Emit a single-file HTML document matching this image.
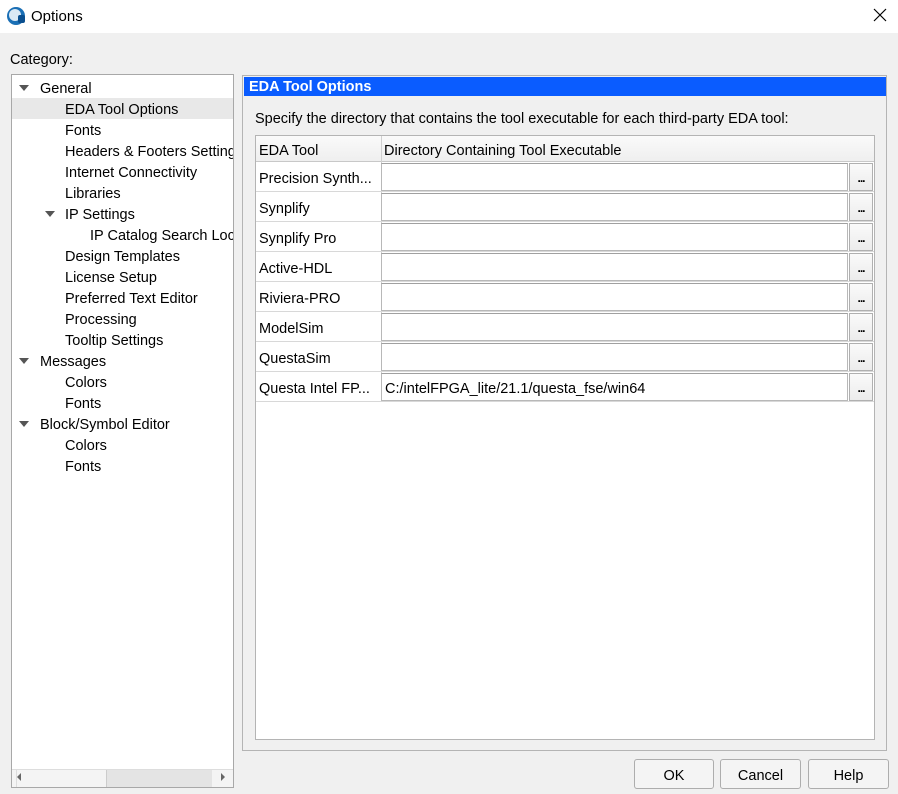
<!DOCTYPE html>
<html><head><meta charset="utf-8"><style>
*{box-sizing:border-box;margin:0;padding:0}
body{width:898px;height:794px;background:#f0f0f0;font-family:"Liberation Sans",sans-serif;font-size:14.5px;color:#000;position:relative;overflow:hidden}
.a{position:absolute;white-space:nowrap}
.tree .a{line-height:21px;height:21px}
.tri{width:0;height:0;border-left:5px solid transparent;border-right:5px solid transparent;border-top:6px solid #555}
.row{position:absolute;left:256px;width:618px;height:30px;border-bottom:1px solid #d8d8d8}
.row .n{position:absolute;left:3px;top:2px;line-height:30px}
.row .f{position:absolute;left:125px;top:1px;width:467px;height:28px;background:#fff;border:1px solid #b8b8b8;border-top-color:#a0a0a0;padding-left:3px;line-height:30px}
.row .b{position:absolute;left:593px;top:1px;width:24px;height:28px;background:linear-gradient(#fafafa,#ececec);border:1px solid #b0b0b0;font-size:12px;text-align:center;line-height:28px;font-weight:bold;letter-spacing:-1px}
.btn{position:absolute;top:759px;height:30px;border:1px solid #adadad;border-radius:3px;background:#f4f4f4;text-align:center;line-height:32px}
</style></head><body>
<div class="a" style="left:0;top:0;width:898px;height:33px;background:#fff"></div>
<svg class="a" style="left:6px;top:6px" width="20" height="20" viewBox="0 0 20 20"><circle cx="10" cy="10" r="9" fill="#1a6fb5"/><circle cx="9" cy="9" r="6" fill="#dbe9f5"/><rect x="12" y="9" width="7" height="8" rx="2" fill="#0a4f8f"/></svg>
<div class="a" style="left:31px;top:8px;font-size:15px">Options</div>
<svg class="a" style="left:873px;top:8px" width="14" height="14" viewBox="0 0 14 14"><path d="M1 1L13 13M13 1L1 13" stroke="#000" stroke-width="1.2"/></svg>
<div class="a" style="left:10px;top:52px">Category:</div>
<div class="a" style="left:11px;top:74px;width:223px;height:714px;background:#fff;border:1px solid #a8a8a8"></div>
<div class="a" style="left:12px;top:98px;width:221px;height:21px;background:#e8e8e8"></div>
<div class="tree" style="position:absolute;left:0;top:79px;width:233px;height:688px;overflow:hidden">
<div class="a tri" style="left:19px;top:6px;height:0"></div><div class="a" style="left:40px;top:0">General</div>
<div class="a" style="left:65px;top:21px">EDA Tool Options</div>
<div class="a" style="left:65px;top:42px">Fonts</div>
<div class="a" style="left:65px;top:63px">Headers &amp; Footers Settings</div>
<div class="a" style="left:65px;top:84px">Internet Connectivity</div>
<div class="a" style="left:65px;top:105px">Libraries</div>
<div class="a tri" style="left:45px;top:132px;height:0"></div><div class="a" style="left:65px;top:126px">IP Settings</div>
<div class="a" style="left:90px;top:147px">IP Catalog Search Locations</div>
<div class="a" style="left:65px;top:168px">Design Templates</div>
<div class="a" style="left:65px;top:189px">License Setup</div>
<div class="a" style="left:65px;top:210px">Preferred Text Editor</div>
<div class="a" style="left:65px;top:231px">Processing</div>
<div class="a" style="left:65px;top:252px">Tooltip Settings</div>
<div class="a tri" style="left:19px;top:279px;height:0"></div><div class="a" style="left:40px;top:273px">Messages</div>
<div class="a" style="left:65px;top:294px">Colors</div>
<div class="a" style="left:65px;top:315px">Fonts</div>
<div class="a tri" style="left:19px;top:342px;height:0"></div><div class="a" style="left:40px;top:336px">Block/Symbol Editor</div>
<div class="a" style="left:65px;top:357px">Colors</div>
<div class="a" style="left:65px;top:378px">Fonts</div>
</div>
<div class="a" style="left:12px;top:769px;width:221px;height:18px;background:#f4f4f4;border-top:1px solid #ddd"></div>
<div class="a" style="left:12px;top:769px;width:5px;height:18px;border-right:1px solid #ddd"></div>
<div class="a" style="left:17px;top:773px;width:0;height:0;border-top:4px solid transparent;border-bottom:4px solid transparent;border-right:4px solid #666"></div>
<div class="a" style="left:106px;top:770px;width:106px;height:17px;background:#e4e4e4;border-left:1px solid #ccc"></div>
<div class="a" style="left:221px;top:773px;width:0;height:0;border-top:4px solid transparent;border-bottom:4px solid transparent;border-left:4px solid #666"></div>
<div class="a" style="left:242px;top:75px;width:645px;height:676px;border:1px solid #b4b4b4"></div>
<div class="a" style="left:244px;top:77px;width:642px;height:19px;background:#0a5cff;color:#fff;font-weight:bold;line-height:20px;padding-left:5px;overflow:hidden">EDA Tool Options</div>
<div class="a" style="left:255px;top:111px">Specify the directory that contains the tool executable for each third-party EDA tool:</div>
<div class="a" style="left:255px;top:135px;width:620px;height:605px;background:#fff;border:1px solid #b4b4b4"></div>
<div class="a" style="left:256px;top:136px;width:618px;height:26px;background:linear-gradient(#fafafa,#efefef);border-bottom:1px solid #c8c8c8"></div>
<div class="a" style="left:381px;top:136px;width:1px;height:266px;background:#d0d0d0"></div>
<div class="a" style="left:259px;top:138px;line-height:26px">EDA Tool</div>
<div class="a" style="left:384px;top:138px;line-height:26px">Directory Containing Tool Executable</div>
<div class="row" style="top:162px"><div class="n">Precision Synth...</div><div class="f"></div><div class="b">...</div></div>
<div class="row" style="top:192px"><div class="n">Synplify</div><div class="f"></div><div class="b">...</div></div>
<div class="row" style="top:222px"><div class="n">Synplify Pro</div><div class="f"></div><div class="b">...</div></div>
<div class="row" style="top:252px"><div class="n">Active-HDL</div><div class="f"></div><div class="b">...</div></div>
<div class="row" style="top:282px"><div class="n">Riviera-PRO</div><div class="f"></div><div class="b">...</div></div>
<div class="row" style="top:312px"><div class="n">ModelSim</div><div class="f"></div><div class="b">...</div></div>
<div class="row" style="top:342px"><div class="n">QuestaSim</div><div class="f"></div><div class="b">...</div></div>
<div class="row" style="top:372px"><div class="n">Questa Intel FP...</div><div class="f">C:/intelFPGA_lite/21.1/questa_fse/win64</div><div class="b">...</div></div>
<div class="btn" style="left:634px;width:80px">OK</div>
<div class="btn" style="left:720px;width:81px">Cancel</div>
<div class="btn" style="left:808px;width:81px">Help</div>
</body></html>
